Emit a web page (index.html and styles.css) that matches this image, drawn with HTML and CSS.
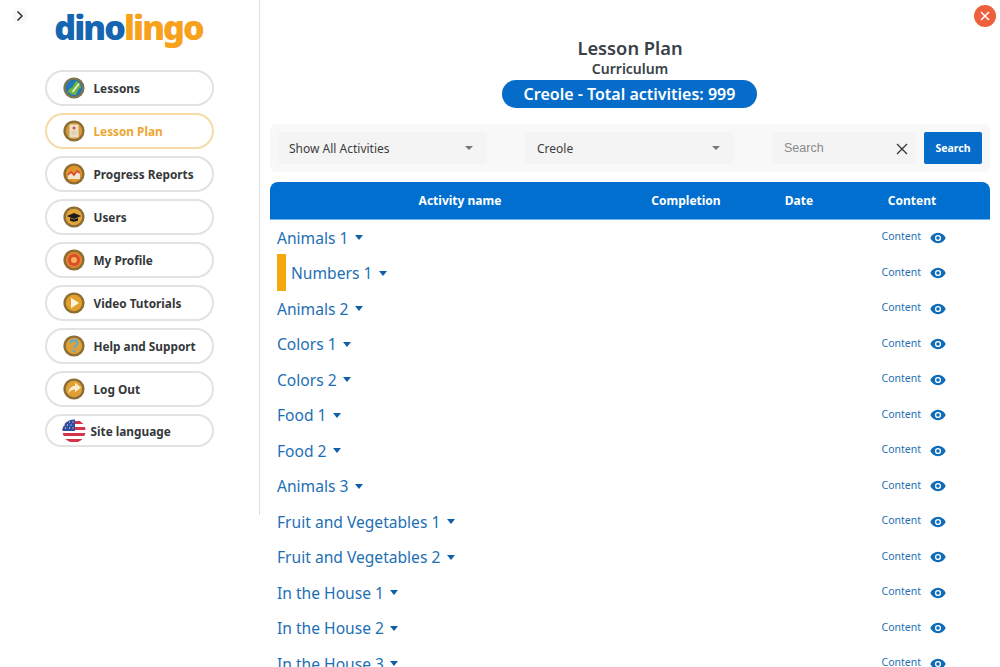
FILE: index.html
```html
<!DOCTYPE html>
<html lang="en">
<head>
<meta charset="utf-8">
<title>Lesson Plan</title>
<link rel="stylesheet" href="styles.css">
</head>
<body>
<svg class="defs" width="0" height="0" aria-hidden="true"><symbol id="eye" viewBox="0 0 16 12"><path fill-rule="evenodd" d="M8 .8C4.500.8 1.600 3 .3 6c1.300 3 4.200 5.200 7.700 5.200S14.400 9 15.700 6C14.400 3 11.500.8 8 .8zm0 8.300A3.100 3.100 0 1 1 8 2.900a3.100 3.100 0 0 1 0 6.200zm0-1.300a1.800 1.800 0 1 0 0-3.600 1.800 1.800 0 0 0 0 3.600z" fill="#0f6cb8"/></symbol></svg>
<div class="app">
  <aside class="sidebar">
    <button class="toggle" aria-label="Expand"><svg width="10" height="12" viewBox="0 0 10 12"><path d="M2.500 1.500 7 6l-4.500 4.500" fill="none" stroke="#333" stroke-width="1.500"/></svg></button>
    <div class="logo"><span class="logo-a">dino</span><span class="logo-b">lingo</span></div>
    <nav class="nav">
      <a class="pill"><svg class="medal" viewBox="0 0 22 22"><circle cx="11" cy="11" r="10.600" fill="#7f7350"/><circle cx="11" cy="11" r="8.200" fill="#1f78b8"/><path d="M5 15c1-5 4-3 5-6 1-2 2-3 3-5 3 1 5 4 5 7-3 0-3 3-5 7-3 0-6-1-8-3z" fill="#6fb43f"/><path d="M9.500 15 16 6.500" stroke="#eef0dc" stroke-width="1.600"/></svg><span>Lessons</span></a>
      <a class="pill active"><svg class="medal" viewBox="0 0 22 22"><circle cx="11" cy="11" r="10.600" fill="#8c6d33"/><circle cx="11" cy="11" r="8.200" fill="#d69a3c"/><rect x="6.500" y="4.500" width="9" height="13" fill="#eadfc8"/><circle cx="11" cy="8" r="1.500" fill="#d9483a"/><path d="M8.500 12h5M8.500 14h5" stroke="#cfc0a2"/></svg><span>Lesson Plan</span></a>
      <a class="pill"><svg class="medal" viewBox="0 0 22 22"><circle cx="11" cy="11" r="10.600" fill="#8c6d33"/><circle cx="11" cy="11" r="8.200" fill="#e0952c"/><path d="M5 16v-4l3-3 3 3 3-4 3 2v6z" fill="#f4e5cf"/><path d="M5 12l3-3 3 3 3-4 3 2" fill="none" stroke="#d9482c" stroke-width="1.600"/></svg><span>Progress Reports</span></a>
      <a class="pill"><svg class="medal" viewBox="0 0 22 22"><circle cx="11" cy="11" r="10.600" fill="#8c6d33"/><circle cx="11" cy="11" r="8.200" fill="#e3a53a"/><path d="M3.800 10 11 7l7.200 3-7.200 3z" fill="#1c1c1c"/><path d="M7 12v2.500c2 1.500 6 1.500 8 0V12l-4 1.600z" fill="#1c1c1c"/></svg><span>Users</span></a>
      <a class="pill"><svg class="medal" viewBox="0 0 22 22"><circle cx="11" cy="11" r="10.600" fill="#8c6d33"/><circle cx="11" cy="11" r="8.200" fill="#e0822e"/><circle cx="11" cy="11" r="6" fill="#da4f28"/><circle cx="11" cy="11" r="3" fill="#f6b25a"/></svg><span>My Profile</span></a>
      <a class="pill"><svg class="medal" viewBox="0 0 22 22"><circle cx="11" cy="11" r="10.600" fill="#8c6d33"/><circle cx="11" cy="11" r="8.200" fill="#e3a02c"/><path d="M8 5.800 16 11l-8 5.200z" fill="#fbf3dd"/></svg><span>Video Tutorials</span></a>
      <a class="pill"><svg class="medal" viewBox="0 0 22 22"><circle cx="11" cy="11" r="10.600" fill="#8c6d33"/><circle cx="11" cy="11" r="8.200" fill="#dfa03a"/><path d="M7.800 8.200c0-4 6.600-4 6.600 0 0 2.600-3.200 2.600-3.200 5" fill="none" stroke="#63adc4" stroke-width="2.200"/><circle cx="11.200" cy="16.200" r="1.400" fill="#63adc4"/></svg><span>Help and Support</span></a>
      <a class="pill"><svg class="medal" viewBox="0 0 22 22"><circle cx="11" cy="11" r="10.600" fill="#8c6d33"/><circle cx="11" cy="11" r="8.200" fill="#e0a035"/><path d="M12 4.800 18 9.500l-6 4.700v-2.800c-3 0-5 1-6.500 4 .2-4.500 2.500-7.400 6.500-7.700z" fill="#fbeccb"/></svg><span>Log Out</span></a>
      <a class="pill lang"><svg class="flag" viewBox="0 0 24 24"><defs><clipPath id="fc"><circle cx="12" cy="12" r="11.500"/></clipPath></defs><g clip-path="url(#fc)"><rect width="24" height="24" fill="#fff"/><path d="M0 2h24v3H0zM0 8h24v3H0zM0 14h24v3H0zM0 20h24v3H0z" fill="#d3344a"/><rect width="13" height="12" fill="#2f4f9e"/><path d="M3 3h1M7 3h1M10.500 3h1M2 6h1M5 6h1M8.500 6h1M3 9h1M7 9h1M10.500 9h1" stroke="#fff" stroke-width="1.200"/></g></svg><span>Site language</span></a>
    </nav>
  </aside>
  <main class="main">
    <button class="close" aria-label="Close"><svg width="10" height="10" viewBox="0 0 10 10"><path d="M1 1l8 8M9 1 1 9" stroke="#fff" stroke-width="1.500"/></svg></button>
    <header class="head">
      <h1>Lesson Plan</h1>
      <h2>Curriculum</h2>
      <div class="total">Creole - Total activities: 999</div>
    </header>
    <section class="filters">
      <div class="select"><span>Show All Activities</span><i class="caret"></i></div>
      <div class="select"><span>Creole</span><i class="caret"></i></div>
      <div class="search"><span>Search</span><svg width="12" height="12" viewBox="0 0 12 12"><path d="M1 1l10 10M11 1 1 11" stroke="#333" stroke-width="1.300"/></svg></div>
      <button class="go">Search</button>
    </section>
    <div class="table-head">
      <div>Activity name</div><div>Completion</div><div>Date</div><div>Content</div>
    </div>
    <div class="rows">
      <div class="row"><a class="name">Animals 1<i class="tri"></i></a><a class="content"><span>Content</span><svg class="eye"><use href="#eye"/></svg></a></div>
      <div class="row"><a class="name"><b class="mark"></b>Numbers 1<i class="tri"></i></a><a class="content"><span>Content</span><svg class="eye"><use href="#eye"/></svg></a></div>
      <div class="row"><a class="name">Animals 2<i class="tri"></i></a><a class="content"><span>Content</span><svg class="eye"><use href="#eye"/></svg></a></div>
      <div class="row"><a class="name">Colors 1<i class="tri"></i></a><a class="content"><span>Content</span><svg class="eye"><use href="#eye"/></svg></a></div>
      <div class="row"><a class="name">Colors 2<i class="tri"></i></a><a class="content"><span>Content</span><svg class="eye"><use href="#eye"/></svg></a></div>
      <div class="row"><a class="name">Food 1<i class="tri"></i></a><a class="content"><span>Content</span><svg class="eye"><use href="#eye"/></svg></a></div>
      <div class="row"><a class="name">Food 2<i class="tri"></i></a><a class="content"><span>Content</span><svg class="eye"><use href="#eye"/></svg></a></div>
      <div class="row"><a class="name">Animals 3<i class="tri"></i></a><a class="content"><span>Content</span><svg class="eye"><use href="#eye"/></svg></a></div>
      <div class="row"><a class="name">Fruit and Vegetables 1<i class="tri"></i></a><a class="content"><span>Content</span><svg class="eye"><use href="#eye"/></svg></a></div>
      <div class="row"><a class="name">Fruit and Vegetables 2<i class="tri"></i></a><a class="content"><span>Content</span><svg class="eye"><use href="#eye"/></svg></a></div>
      <div class="row"><a class="name">In the House 1<i class="tri"></i></a><a class="content"><span>Content</span><svg class="eye"><use href="#eye"/></svg></a></div>
      <div class="row"><a class="name">In the House 2<i class="tri"></i></a><a class="content"><span>Content</span><svg class="eye"><use href="#eye"/></svg></a></div>
      <div class="row"><a class="name">In the House 3<i class="tri"></i></a><a class="content"><span>Content</span><svg class="eye"><use href="#eye"/></svg></a></div>
    </div>
  </main>
</div>
</body>
</html>
```
FILE: styles.css
```css
* { box-sizing: border-box; }
html, body { margin: 0; height: 100%; overflow: hidden; background: #fff; }
body { font-family: "Noto Sans", "Open Sans", sans-serif; color: #333; }
button { font: inherit; border: 0; padding: 0; }
.defs { display: block; height: 0; }
.app { display: flex; align-items: flex-start; height: 667px; overflow: hidden; }

.sidebar { position: relative; flex: 0 0 260px; height: 515px; border-right: 1px solid #dfdfdf; display: flex; flex-direction: column; align-items: center; padding-top: 7px; }
.toggle { position: absolute; left: 12px; top: 8px; width: 16px; height: 16px; border-radius: 50%; background: #f6f8fa; display: flex; align-items: center; justify-content: center; }
.logo { font-weight: 900; font-size: 34px; line-height: 40px; letter-spacing: -1.900px; margin-right: 2px; }
.logo-a { color: #1565b0; }
.logo-b { color: #f7a11c; }
.nav { display: flex; flex-direction: column; gap: 7px; margin-top: 23px; width: 169px; margin-right: 1px; }
.pill { height: 36px; border: 2px solid #e2e2e2; border-radius: 18px; display: flex; align-items: center; gap: 9px; padding-left: 16px; font-size: 11.800px; font-weight: 700; color: #35383b; }
.pill.active { border-color: #f5dca6; color: #eda62f; }
.pill.lang { height: 33px; gap: 5px; padding-left: 15px; }
.medal { width: 22px; height: 22px; flex: none; }
.flag { width: 24px; height: 24px; flex: none; }

.main { position: relative; flex: 1; padding: 37px 10px 0; }
.close { position: absolute; right: 4px; top: 5px; width: 22px; height: 22px; border-radius: 50%; background: #ee5f3c; display: flex; align-items: center; justify-content: center; }
.head { display: flex; flex-direction: column; align-items: center; }
.head h1 { margin: 0; font-size: 18.300px; line-height: 21px; font-weight: 600; color: #3a4148; }
.head h2 { margin: 0; font-size: 14px; line-height: 21px; font-weight: 600; color: #3a4148; }
.total { margin: 1px 1px 0 0; width: 255px; height: 28px; border-radius: 14px; background: #066cc9; color: #fff; font-size: 16px; font-weight: 600; line-height: 28px; text-align: center; }

.filters { margin-top: 16px; height: 48px; background: #f8f8f8; border-radius: 6px; display: flex; align-items: center; padding: 0 8px; }
.select { width: 209px; height: 32px; margin-right: 38px; background: #f4f4f4; border-radius: 4px; display: flex; align-items: center; justify-content: space-between; padding: 0 14px 0 11px; font-size: 12px; color: #3c3c3c; }
.select + .select { padding-left: 12px; }
.caret { width: 0; height: 0; border: 4px solid transparent; border-top: 4.500px solid #777; border-bottom: 0; }
.search { width: 144px; height: 32px; background: #f4f4f4; border-radius: 4px; display: flex; align-items: center; justify-content: space-between; padding: 0 8px 0 12px; font-family: "Liberation Sans", Arial, sans-serif; font-size: 12.500px; color: #8b8b8b; }
.search svg { margin-top: 2px; }
.go { margin-left: 8px; width: 58px; height: 32px; background: #066cc9; border-radius: 2px; color: #fff; font-size: 10.500px; font-weight: 700; }

.table-head { margin-top: 10px; height: 38px; background: #006fd0; border-radius: 8px 8px 0 0; border-bottom: 1px solid #6db8f2; display: grid; grid-template-columns: 380px 72px 154px 72px; align-items: center; text-align: center; color: #fff; font-size: 12px; font-weight: 700; }

.rows { display: flex; flex-direction: column; }
.row { height: 35.500px; flex: none; display: flex; align-items: center; justify-content: space-between; padding: 0 44px 0 7px; }
.name { display: flex; align-items: center; font-size: 15.600px; color: #1d6fb3; }
.tri { width: 0; height: 0; margin-left: 6.500px; border: 4px solid transparent; border-top: 5px solid #0f5fa8; border-bottom: 0; }
.mark { width: 9px; height: 37px; margin: 0 5px 2px 0; background: #f5a80d; }
.content { display: flex; align-items: center; gap: 9px; font-size: 10.500px; color: #1d6fb3; }
.content span { margin-bottom: 3px; }
.eye { width: 16px; height: 12px; flex: none; }
```
